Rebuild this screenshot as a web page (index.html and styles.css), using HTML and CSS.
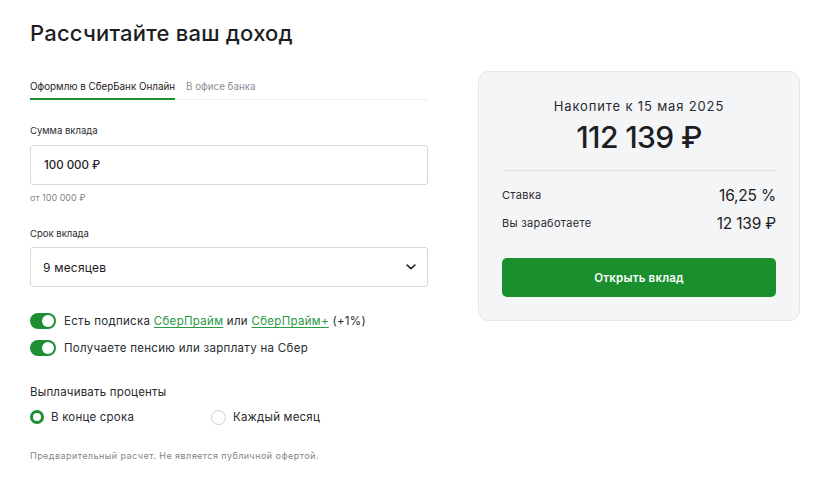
FILE: index.html
```html
<!DOCTYPE html>
<html lang="ru">
<head>
<meta charset="utf-8">
<title>Рассчитайте ваш доход</title>
<link rel="stylesheet" href="styles.css">
</head>
<body>
<div class="page">
  <h1 class="title">Рассчитайте ваш доход</h1>
  <div class="layout">
    <div class="form">
      <div class="tabs">
        <div class="tab tab-active">Оформлю в СберБанк Онлайн</div>
        <div class="tab">В офисе банка</div>
      </div>

      <div class="field field-first">
        <div class="label">Сумма вклада</div>
        <div class="box">100 000 ₽</div>
        <div class="hint">от 100 000 ₽</div>
      </div>

      <div class="field">
        <div class="label">Срок вклада</div>
        <div class="box box-select">
          <span>9 месяцев</span>
          <svg class="chevron" width="10" height="6" viewBox="0 0 10 6"><path d="M1.2 1.2 L5 4.6 L8.8 1.2" fill="none" stroke="#2b2d33" stroke-width="1.8" stroke-linecap="round" stroke-linejoin="round"/></svg>
        </div>
      </div>

      <div class="toggles">
        <div class="toggle-row">
          <span class="toggle"><span class="knob"></span></span>
          <span>Есть подписка <a class="link">СберПрайм</a> или <a class="link">СберПрайм+</a> (+1%)</span>
        </div>
        <div class="toggle-row">
          <span class="toggle"><span class="knob"></span></span>
          <span>Получаете пенсию или зарплату на Сбер</span>
        </div>
      </div>

      <div class="payout">
        <div class="payout-title">Выплачивать проценты</div>
        <div class="radios">
          <div class="radio-item radio-first"><span class="radio radio-on"></span>В конце срока</div>
          <div class="radio-item"><span class="radio"></span>Каждый месяц</div>
        </div>
      </div>

      <p class="note">Предварительный расчет. Не является публичной офертой.</p>
    </div>

    <aside class="card">
      <div class="card-sub">Накопите к 15 мая 2025</div>
      <div class="card-sum">112 139 ₽</div>
      <div class="card-rows">
        <div class="card-row"><span>Ставка</span><span class="val">16,25 %</span></div>
        <div class="card-row"><span>Вы заработаете</span><span class="val">12 139 ₽</span></div>
      </div>
      <button class="btn">Открыть вклад</button>
    </aside>
  </div>
</div>
</body>
</html>
```

FILE: styles.css
```css
* { box-sizing: border-box; }
html, body { margin: 0; padding: 0; background: #ffffff; }
body {
  font-family: Inter, "Open Sans", "Noto Sans", sans-serif;
  color: #1f2024;
}
.page { padding: 19px 0 0 30px; width: 835px; }
.title {
  margin: 0;
  font-size: 22px;
  line-height: 28px;
  font-weight: 500;
  color: #1d1e22;
  letter-spacing: 0.2px;
}
.layout {
  display: flex;
  align-items: flex-start;
  gap: 50px;
  margin-top: 24px;
}
.form { width: 398px; padding-top: 9px; }
.tabs {
  display: flex;
  gap: 11px;
  border-bottom: 1px solid #eceef0;
  font-size: 9.8px;
  line-height: 14px;
}
.tab { padding-bottom: 5px; color: #8a8f96; }
.tab-active {
  color: #1f2024;
  border-bottom: 2px solid #1f8f34;
  margin-bottom: -1px;
  padding-bottom: 4px;
}
.field { margin-top: 23px; }
.field-first { margin-top: 24px; }
.label { font-size: 9.5px; line-height: 14px; color: #2a2b30; }
.box {
  margin-top: 7px;
  height: 40px;
  border: 1px solid #d6d9dd;
  border-radius: 3px;
  display: flex;
  align-items: center;
  padding: 0 13px;
  font-size: 11.5px;
  color: #1f2024;
  font-weight: 500;
}
.box-select {
  margin-top: 6px;
  justify-content: space-between;
  padding: 0 11px 0 12px;
  font-size: 12px;
  font-weight: 400;
  letter-spacing: 0.2px;
}
.chevron { display: block; }
.hint { margin-top: 7px; font-size: 9px; line-height: 12px; color: #7f848b; }
.toggles { margin-top: 26px; display: flex; flex-direction: column; gap: 11px; }
.toggle-row {
  display: flex;
  align-items: center;
  gap: 8px;
  font-size: 11.5px;
  line-height: 16px;
  color: #2a2b30;
  letter-spacing: 0.3px;
}
.toggle {
  width: 26px;
  height: 16px;
  border-radius: 8px;
  background: #1f8f34;
  display: flex;
  align-items: center;
  justify-content: flex-end;
  padding: 0 2px;
  flex: none;
}
.knob { width: 12px; height: 12px; border-radius: 50%; background: #fff; }
.link { color: #2a9a45; text-decoration: underline; text-underline-offset: 2px; text-decoration-thickness: 1px; }
.payout { margin-top: 28px; }
.payout-title { font-size: 11.5px; line-height: 16px; color: #2a2b30; letter-spacing: 0.2px; }
.radios { display: flex; margin-top: 9px; }
.radio-item {
  display: flex;
  align-items: center;
  gap: 7px;
  font-size: 11.5px;
  line-height: 16px;
  color: #2a2b30;
  letter-spacing: 0.2px;
}
.radio-first { width: 181px; }
.radio {
  width: 14px;
  height: 14px;
  border-radius: 50%;
  border: 1px solid #c9ccd0;
  background: #fff;
  flex: none;
}
.radio-item + .radio-item .radio { width: 15px; height: 15px; }
.radio-on { border: 3.5px solid #1f8f34; }
.note {
  margin: 25px 0 0;
  font-size: 9px;
  line-height: 12px;
  color: #80858c;
  letter-spacing: 0.45px;
}
.card {
  width: 322px;
  height: 250px;
  margin-top: 0;
  background: #f4f5f7;
  border: 1px solid #e5e7ea;
  border-radius: 10px;
  padding: 25px 23px 0 23px;
}
.card-sub {
  text-align: center;
  font-size: 13px;
  line-height: 18px;
  color: #2a2b30;
  letter-spacing: 0.85px;
}
.card-sum {
  margin-top: 4px;
  text-align: center;
  font-size: 30px;
  line-height: 36px;
  font-weight: 500;
  color: #1d1e22;
  letter-spacing: -0.6px;
}
.card-rows {
  margin-top: 15px;
  border-top: 1px solid #e1e3e6;
  padding-top: 15px;
  display: flex;
  flex-direction: column;
  gap: 9px;
}
.card-row {
  display: flex;
  justify-content: space-between;
  align-items: center;
  font-size: 11px;
  line-height: 19px;
  color: #2a2b30;
  letter-spacing: 0.3px;
}
.val { font-size: 15.5px; color: #1d1e22; letter-spacing: -0.2px; }
.btn {
  display: block;
  width: 100%;
  margin-top: 25px;
  height: 39px;
  border: none;
  border-radius: 5px;
  background: #1a8f2e;
  color: #fff;
  font-family: inherit;
  font-size: 11.5px;
  font-weight: 600;
  letter-spacing: 0.2px;
}
```
